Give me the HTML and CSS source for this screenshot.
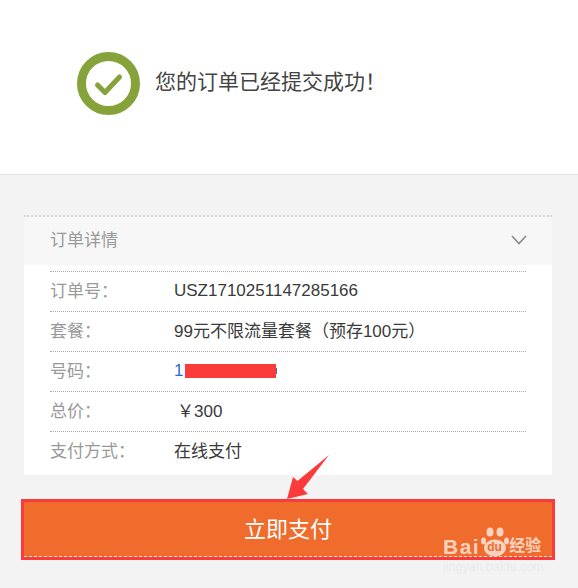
FILE: index.html
```html
<!DOCTYPE html>
<html lang="zh-CN">
<head>
  <meta charset="UTF-8" />
  <meta name="viewport" content="width=device-width, initial-scale=1.0" />
  <title>订单提交成功</title>
  <link rel="stylesheet" href="styles.css">
</head>
<body>

  <!-- 顶部提示 -->
  <div class="success">
    <svg class="success-icon" viewBox="0 0 63 63" width="63" height="63">
      <circle cx="31.500" cy="31.500" r="27" fill="#fff" stroke="#86a23a" stroke-width="9"/>
      <path d="M20.500 33 L28 40.500 L42.500 25" fill="none" stroke="#86a23a" stroke-width="5" stroke-linecap="round" stroke-linejoin="round"/>
    </svg>
    <span>您的订单已经提交成功！</span>
  </div>

  <!-- 订单详情 -->
  <div class="order">
    <div class="order-head">
      <span class="order-title">订单详情</span>
      <svg class="chevron" viewBox="0 0 16 10" width="16" height="10">
        <path d="M1 1 L8 8.500 L15 1" fill="none" stroke="#8a8a8a" stroke-width="1.600"/>
      </svg>
    </div>
    <div class="order-body">
      <div class="row"><span class="label">订单号：</span><span class="value latin">USZ1710251147285166</span></div>
      <div class="row"><span class="label">套餐：</span><span class="value">99元不限流量套餐（预存100元）</span></div>
      <div class="row">
        <span class="label">号码：</span>
        <span class="value latin phone">1<span class="mask"></span></span>
      </div>
      <div class="row"><span class="label">总价：</span><span class="value price">￥300</span></div>
      <div class="row"><span class="label">支付方式：</span><span class="value">在线支付</span></div>
    </div>
  </div>

  <!-- 支付按钮 -->
  <div class="pay-wrap">
    <svg class="arrow" viewBox="0 0 44 48" width="44" height="48">
      <path d="M1 46 L7 24 L11.500 28 L43 2 L17 36 L22 41 Z" fill="#fb3a3a"/>
    </svg>
    <button class="pay">立即支付</button>
    <div class="mark">
      <div class="mark-logo">
        <span class="mark-bai">Bai</span>
        <span class="mark-paw">
          <svg viewBox="0 0 28 30" width="28" height="30">
            <ellipse cx="9" cy="5" rx="3.500" ry="4.500" fill="currentColor"/>
            <ellipse cx="19" cy="5" rx="3.500" ry="4.500" fill="currentColor"/>
            <ellipse cx="2.500" cy="14" rx="2.500" ry="3.500" fill="currentColor"/>
            <ellipse cx="25.500" cy="14" rx="2.500" ry="3.500" fill="currentColor"/>
            <ellipse cx="14" cy="21" rx="11" ry="8.500" fill="currentColor"/>
          </svg>
          <span class="mark-du">du</span>
        </span>
        <span class="mark-jy">经验</span>
      </div>
      <div class="mark-url">jingyan.baidu.com</div>
    </div>
  </div>

</body>
</html>
```

FILE: styles.css
```css
body {
  margin: 0;
  height: 588px;
  overflow: hidden;
  background: #f3f3f3;
  color: #333;
  font-family: "Liberation Sans", "Noto Sans CJK SC", sans-serif;
}

/* 顶部提示 */
.success {
  display: flex;
  align-items: center;
  gap: 15px;
  height: 175px;
  padding: 0 0 15px 77px;
  box-sizing: border-box;
  background: #fff;
  border-bottom: 1px solid #e2e2e2;
  font-size: 21px;
  color: #444;
}

.success-icon {
  flex: none;
  margin-top: 7px;
}

/* 订单详情 */
.order {
  margin: 40px 26px 0 24px;
  border-top: 2px dotted #d8d8d8;
}

.order-head {
  display: flex;
  align-items: center;
  justify-content: space-between;
  height: 48px;
  padding: 0 25px 3px 26px;
  box-sizing: border-box;
  background: #f7f7f7;
  font-size: 17px;
  color: #999;
}

.order-title {
  margin-top: -3px;
}

.order-body {
  padding: 6px 26px 4px;
  background: #fff;
}

.row {
  display: flex;
  align-items: center;
  height: 40px;
  padding-bottom: 5px;
  box-sizing: border-box;
  border-top: 1px dotted #aaa;
  font-size: 17px;
}

.label {
  width: 124px;
  color: #999;
}

.value {
  color: #3a3a3a;
}

.latin {
  padding-top: 3px;
}

.phone {
  position: relative;
  color: #2a6fd0;
}

.mask {
  position: absolute;
  left: 11px;
  top: 6px;
  width: 91px;
  height: 14px;
  background: #fb3a3a;
}

.mask::after {
  content: "";
  position: absolute;
  left: 91px;
  top: 4px;
  width: 1px;
  height: 6px;
  background: #2a6fd0;
}

.price {
  padding-left: 3px;
}

/* 支付按钮 */
.pay-wrap {
  position: relative;
  margin: 24px 23px 0 21px;
}

.pay {
  position: relative;
  display: block;
  width: 100%;
  height: 61px;
  padding: 0 0 6px;
  box-sizing: border-box;
  border: 3px solid #fb3a3a;
  background: #ef6c2d;
  color: #fff;
  font-family: inherit;
  font-size: 22px;
}

.pay::after {
  content: "";
  position: absolute;
  left: 0;
  right: 0;
  bottom: 0;
  border-bottom: 1px dashed #f3e4dc;
}

.arrow {
  position: absolute;
  left: 265px;
  top: -46px;
}

/* 水印 */
.mark {
  position: absolute;
  left: 422px;
  top: 28px;
  width: 110px;
  color: rgba(255, 255, 255, 0.7);
}

.mark-logo {
  display: flex;
  align-items: flex-end;
  height: 30px;
  white-space: nowrap;
}

.mark-bai {
  font-size: 21px;
  font-weight: bold;
  letter-spacing: 1.500px;
  line-height: 20px;
}

.mark-paw {
  position: relative;
  display: block;
  width: 28px;
  height: 30px;
  margin-left: 1px;
}

.mark-du {
  position: absolute;
  left: 6px;
  top: 13px;
  font-size: 12px;
  font-weight: bold;
  color: #ef6c2d;
}

.mark-jy {
  font-size: 16px;
  font-weight: bold;
  line-height: 22px;
}

.mark-url {
  margin-top: 3px;
  font-size: 12.500px;
  color: rgba(225, 225, 225, 0.55);
  white-space: nowrap;
}
```
